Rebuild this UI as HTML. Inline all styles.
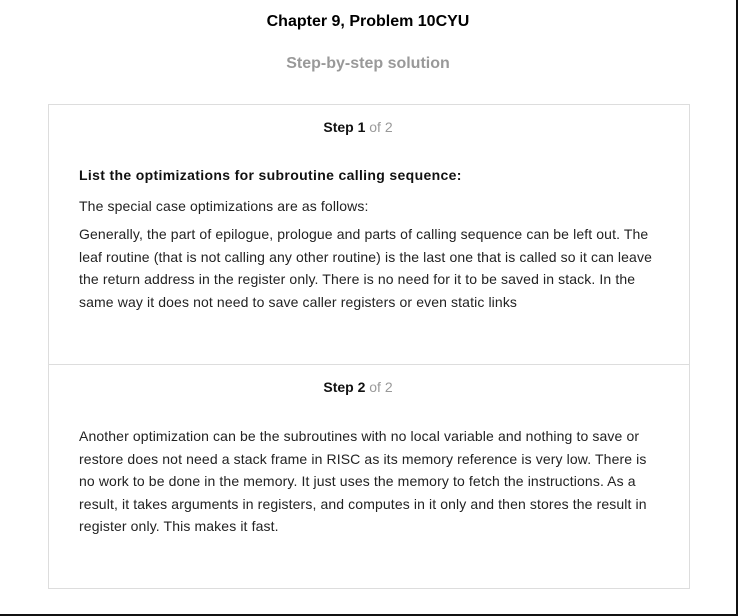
<!DOCTYPE html>
<html><head><style>
*{margin:0;padding:0;box-sizing:border-box}
body{width:738px;height:616px;background:#fff;font-family:"Liberation Sans",Arial,sans-serif;color:#222;position:relative;overflow:hidden;border-right:2px solid #111;border-bottom:2px solid #111}
.t{position:absolute;left:0;width:736px;text-align:center;font-weight:bold}
.box{position:absolute;left:48px;top:104px;width:642px;height:485px;border:1px solid #ddd}
.div{position:absolute;left:0;right:0;top:259px;border-top:1px solid #ddd}
.step{position:absolute;left:-11px;width:640px;text-align:center;font-size:14px;font-weight:bold;color:#111}
.step span{font-weight:normal;color:#999}
.p{position:absolute;left:30px;width:620px;font-size:14px;line-height:22.5px;color:#222;white-space:nowrap;letter-spacing:0.12px}
</style></head><body>
<div class="t" style="top:13px;font-size:16px;color:#000">Chapter 9, Problem 10CYU</div>
<div class="t" style="top:55px;font-size:16px;color:#999">Step-by-step solution</div>
<div class="box">
<div class="step" style="top:14px">Step 1 <span>of 2</span></div>
<div class="p" style="top:59px;font-weight:bold;color:#111;letter-spacing:0.34px">List the optimizations for subroutine calling sequence:</div>
<div class="p" style="top:90px">The special case optimizations are as follows:</div>
<div class="p" style="top:118px">Generally, the part of epilogue, prologue and parts of calling sequence can be left out. The<br>leaf routine (that is not calling any other routine) is the last one that is called so it can leave<br>the return address in the register only. There is no need for it to be saved in stack. In the<br>same way it does not need to save caller registers or even static links</div>
<div class="div"></div>
<div class="step" style="top:274px">Step 2 <span>of 2</span></div>
<div class="p" style="top:320px">Another optimization can be the subroutines with no local variable and nothing to save or<br>restore does not need a stack frame in RISC as its memory reference is very low. There is<br>no work to be done in the memory. It just uses the memory to fetch the instructions. As a<br>result, it takes arguments in registers, and computes in it only and then stores the result in<br>register only. This makes it fast.</div>
</div>
</body></html>
